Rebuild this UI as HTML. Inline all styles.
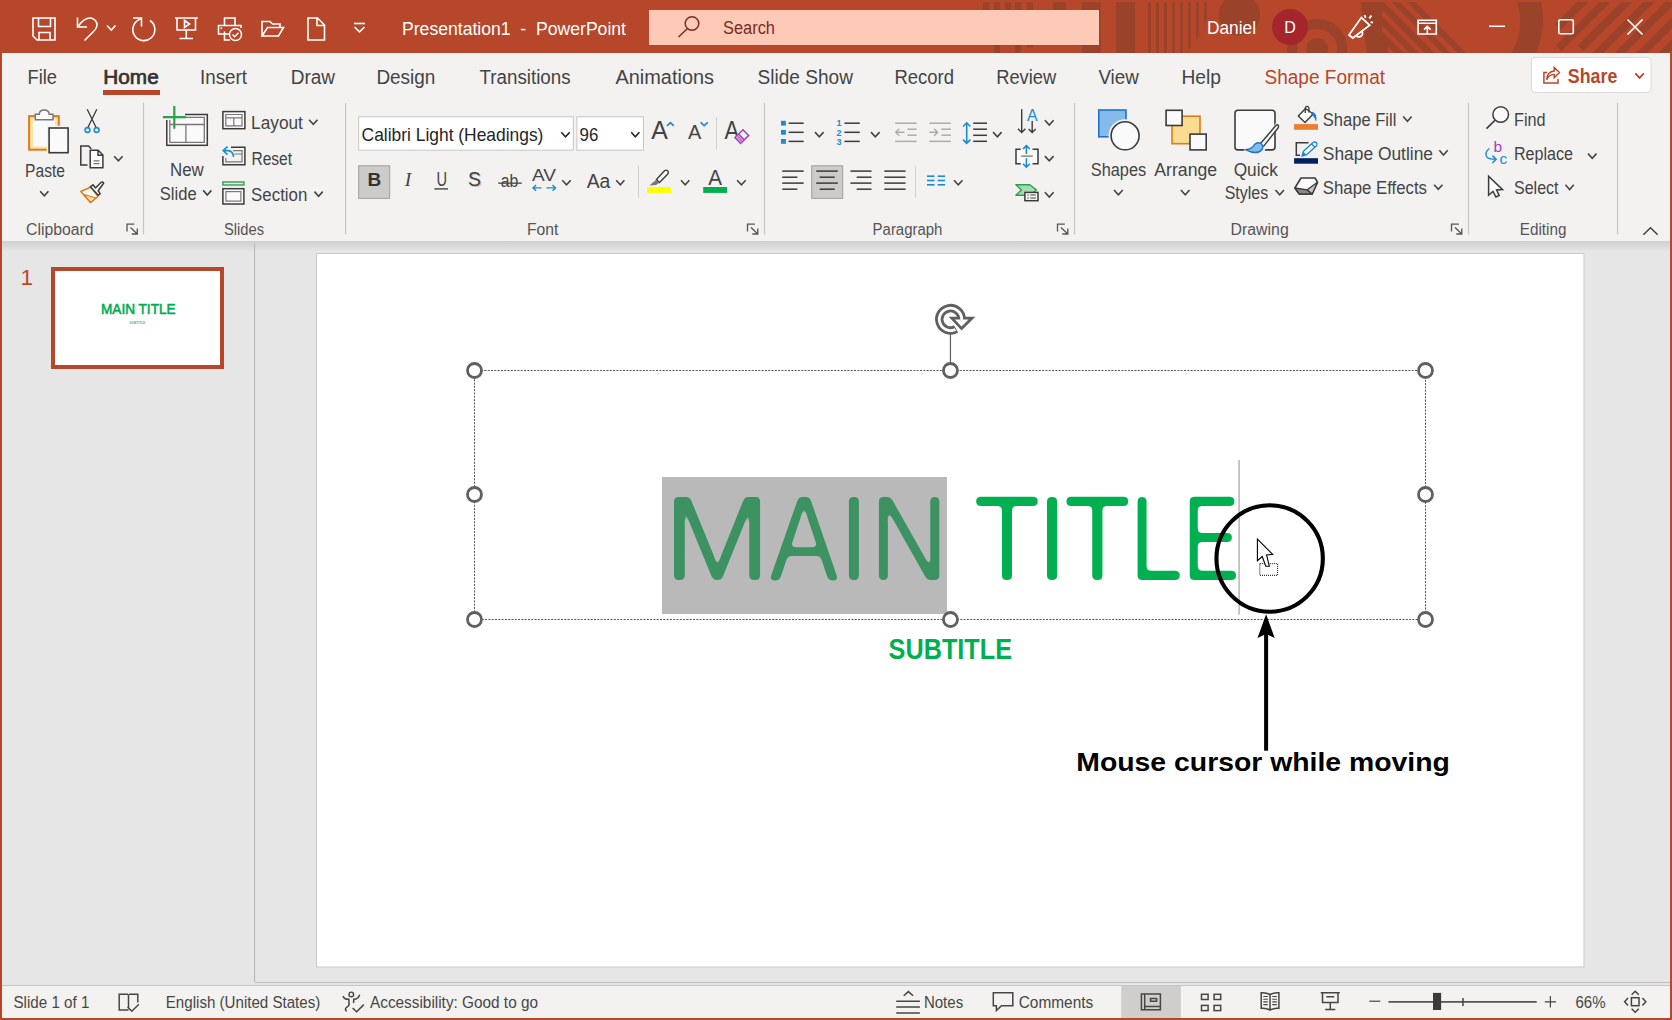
<!DOCTYPE html><html><head><meta charset="utf-8"><title>PowerPoint</title>
<style>html,body{margin:0;padding:0;background:#E6E6E6;overflow:hidden}svg{display:block;font-family:'Liberation Sans', sans-serif}</style></head><body>
<svg width="1672" height="1020" viewBox="0 0 1672 1020">
<rect x="0" y="0" width="1672" height="1020" fill="#B7472A"/>
<rect x="2" y="53" width="1668" height="188.2" fill="#F3F2F1"/>
<defs><linearGradient id="sh" x1="0" y1="0" x2="0" y2="1"><stop offset="0" stop-color="#cfcfcf"/><stop offset="1" stop-color="#E6E6E6"/></linearGradient></defs>
<rect x="2" y="241.2" width="1668" height="744.8" fill="#E6E6E6"/>
<rect x="2" y="241.2" width="1668" height="10.5" fill="url(#sh)"/>
<rect x="2" y="986" width="1668" height="32" fill="#F3F2F1"/>
<rect x="2" y="985" width="1668" height="1" fill="#c8c8c8"/>
<defs><clipPath id="tb"><rect x="0" y="0" width="1672" height="53"/></clipPath></defs>
<defs><clipPath id="dg"><rect x="1381.9" y="2" width="100" height="51"/></clipPath></defs>
<g clip-path="url(#tb)" fill="#9A422A" stroke="none">
<rect x="983.1" y="2.2" width="5.8" height="27.8"/>
<rect x="994.1" y="2.2" width="5.8" height="50.8"/>
<rect x="1005.1" y="2.2" width="5.9" height="27.8"/>
<rect x="1015" y="2.2" width="6.0" height="50.8"/>
<rect x="1027.1" y="2.2" width="5.8" height="45.3"/>
<rect x="1082" y="2.2" width="18.8" height="50.8"/>
<path d="M1052.8 2.2 H1065.9 V30 H1055 Z"/>
<rect x="1116" y="2" width="19" height="51"/>
<rect x="1148.1" y="2" width="2.8" height="51"/>
<rect x="1156.1" y="2" width="2.8" height="51"/>
<rect x="1164.1" y="2" width="2.8" height="51"/>
<rect x="1172.2" y="2" width="2.8" height="51"/>
<rect x="1180.2" y="2" width="2.8" height="51"/>
<path d="M1188.2 2 h2.8 V46.8 L1188.2 50 Z"/>
<path d="M1196.2 2 h2.8 V35.5 L1196.2 40.4 Z"/>
<path d="M1204.2 2 h2.8 V19 L1204.2 24 Z"/>
<circle cx="1239.3" cy="14.8" r="20.7"/>
<circle cx="1317.2" cy="49" r="25" fill="none" stroke="#9A422A" stroke-width="10"/>
<circle cx="1317.2" cy="49" r="10.8"/>
<path d="M1361 2 H1415 L1466 53 H1366.5 Z"/>
<g clip-path="url(#dg)" fill="#B7472A">
<path d="M1399.7 2 H1406.8 L1457.8 53 H1450.7 Z"/>
<path d="M1383.5 2 H1391.4 L1442.4 53 H1434.5 Z"/>
<path d="M1367.4 2 H1373.9 L1424.9 53 H1418.4 Z"/>
<path d="M1352.3 2 H1358.8 L1409.8 53 H1403.3 Z"/>
<path d="M1388 46.3 L1394.7 53 H1388 Z"/>
</g>
<path d="M1517 2 A58.5 58.5 0 0 1 1511 53 H1536 A81 81 0 0 0 1541 2 Z"/>
<path d="M1577.4 2 h11 L1560.9 29.5 L1555.4 24 Z"/>
<path d="M1599.4 2 h11 L1561.3 51.1 L1555.8 45.6 Z"/>
<path d="M1621.4 2 h11 L1583.3 51.1 L1577.8 45.6 Z"/>
<path d="M1643.4 2 h11 l-51 51 h-11 Z"/>
<path d="M1665.4 2 h11 l-51 51 h-11 Z"/>
<path d="M1687.4 2 h11 l-51 51 h-11 Z"/>
<path d="M1709.4 2 h11 l-51 51 h-11 Z"/>
</g>
<path d="M33 18 H55 V40 H37 L33 36 Z M38.5 18 V26.5 H50.5 V18 M39 40 V32.5 H50 V40" fill="none" stroke="#ffffff" stroke-width="1.6"/>
<path d="M77.5 17.5 V27 H87" fill="none" stroke="#ffffff" stroke-width="1.6"/>
<path d="M78 26.5 Q84 17.5 91 18 Q97 19.5 97 25.5 Q96.5 29 93 32 L84.5 40.5" fill="none" stroke="#ffffff" stroke-width="1.6"/>
<path d="M107 25.5 l4.25 4.5 l4.25 -4.5" fill="none" stroke="#ffffff" stroke-width="1.6"/>
<path d="M141 19 A11 11 0 1 0 150 20.5" fill="none" stroke="#ffffff" stroke-width="1.6"/>
<path d="M133 18 H141.5 V26.5" fill="none" stroke="#ffffff" stroke-width="1.6"/>
<path d="M175 18 H198 M177 18 V30 H195.5 V18 M186.3 30 V38.5 M179.5 38.5 H193 M184.5 20.5 L189.5 24 L184.5 27.5 Z" fill="none" stroke="#ffffff" stroke-width="1.6"/>
<path d="M224.5 25 V18 H235 V25 M230 34 H218.5 V25.5 H241 V28 M224.5 31.5 V40 H230" fill="none" stroke="#ffffff" stroke-width="1.6"/>
<circle cx="235.5" cy="34.5" r="6" fill="none" stroke="#ffffff" stroke-width="1.5"/>
<path d="M232.5 34.5 l2.2 2.2 l3.8 -4" fill="none" stroke="#ffffff" stroke-width="1.5"/>
<rect x="220.5" y="27.5" width="1.6" height="1.6" fill="#ffffff"/>
<path d="M262 36 V21.5 H270 L272.5 24 H280 V27.5 M262 36 L267.5 27.5 H283.5 L278.5 36 Z" fill="none" stroke="#ffffff" stroke-width="1.6"/>
<path d="M308 18 H317.5 L324.5 25 V40 H308 Z M317 18 V25.5 H324.5" fill="none" stroke="#ffffff" stroke-width="1.6"/>
<path d="M354 23.5 H365" fill="none" stroke="#ffffff" stroke-width="1.6"/>
<path d="M354.5 27 l5.0 4.8 l5.0 -4.8" fill="none" stroke="#ffffff" stroke-width="1.6"/>
<text x="402" y="35" font-size="18" fill="#ffffff" textLength="224" lengthAdjust="spacingAndGlyphs">Presentation1&#160; -&#160; PowerPoint</text>
<rect x="649" y="10" width="450" height="35" fill="#FCCAB6"/>
<circle cx="692" cy="23.5" r="6.8" fill="none" stroke="#7A2B22" stroke-width="1.5"/><path d="M687.5 28.5 L678.5 37" stroke="#7A2B22" stroke-width="1.5"/>
<text x="723" y="34" font-size="18" fill="#7A2B22" textLength="52" lengthAdjust="spacingAndGlyphs">Search</text>
<text x="1207" y="34" font-size="18" fill="#ffffff" textLength="49" lengthAdjust="spacingAndGlyphs">Daniel</text>
<circle cx="1290" cy="27" r="18" fill="#A4262C"/>
<text x="1290" y="33" font-size="16" fill="#ffffff" text-anchor="middle">D</text>
<path d="M1349 35 L1361.4 17.6 L1369.7 25.3 L1352.8 38 Z M1361.9 31.6 A3.3 3.3 0 0 1 1356.3 35.4" fill="none" stroke="#ffffff" stroke-width="1.8" stroke-linejoin="miter"/>
<path d="M1364.5 15 L1365.6 17.8 M1371.4 15.6 L1369.2 18.4 M1370.6 22.1 L1373 22.6" fill="none" stroke="#ffffff" stroke-width="1.8"/>
<path d="M1418.1 20.2 H1436.3 V34 H1418.1 Z M1418.1 23.2 H1436.3 M1427.3 33.5 V26.3 M1424 29.6 L1427.3 26.3 L1430.6 29.6" fill="none" stroke="#ffffff" stroke-width="1.6"/>
<path d="M1489 26.3 H1505" stroke="#ffffff" stroke-width="1.5"/>
<rect x="1558.8" y="19.8" width="14.5" height="14" rx="1.5" fill="none" stroke="#ffffff" stroke-width="1.6"/>
<path d="M1627.5 19.5 L1642.5 34.5 M1642.5 19.5 L1627.5 34.5" stroke="#ffffff" stroke-width="1.6"/>
<text x="27.5" y="84" font-size="19.5" fill="#444444" textLength="29.5" lengthAdjust="spacingAndGlyphs">File</text>
<text x="200" y="84" font-size="19.5" fill="#444444" textLength="47" lengthAdjust="spacingAndGlyphs">Insert</text>
<text x="290.7" y="84" font-size="19.5" fill="#444444" textLength="44.3" lengthAdjust="spacingAndGlyphs">Draw</text>
<text x="376.4" y="84" font-size="19.5" fill="#444444" textLength="59.0" lengthAdjust="spacingAndGlyphs">Design</text>
<text x="479.5" y="84" font-size="19.5" fill="#444444" textLength="91.1" lengthAdjust="spacingAndGlyphs">Transitions</text>
<text x="615.5" y="84" font-size="19.5" fill="#444444" textLength="98.5" lengthAdjust="spacingAndGlyphs">Animations</text>
<text x="757.5" y="84" font-size="19.5" fill="#444444" textLength="95.5" lengthAdjust="spacingAndGlyphs">Slide Show</text>
<text x="894.5" y="84" font-size="19.5" fill="#444444" textLength="59.5" lengthAdjust="spacingAndGlyphs">Record</text>
<text x="996.2" y="84" font-size="19.5" fill="#444444" textLength="60.1" lengthAdjust="spacingAndGlyphs">Review</text>
<text x="1098.4" y="84" font-size="19.5" fill="#444444" textLength="40.5" lengthAdjust="spacingAndGlyphs">View</text>
<text x="1181.5" y="84" font-size="19.5" fill="#444444" textLength="39.5" lengthAdjust="spacingAndGlyphs">Help</text>
<text x="103.3" y="84" font-size="19.5" fill="#333" textLength="55.4" lengthAdjust="spacingAndGlyphs" stroke="#333" stroke-width="0.7">Home</text>
<rect x="103" y="90" width="57" height="5" fill="#B7472A"/>
<text x="1264.5" y="84" font-size="19.5" fill="#B7472A" textLength="120.5" lengthAdjust="spacingAndGlyphs">Shape Format</text>
<rect x="1531.5" y="57.5" width="119.5" height="35" rx="3.5" fill="#ffffff" stroke="#dddbd9" stroke-width="1"/>
<path d="M1547.2 72.6 H1543.9 V83 H1558 V79" fill="none" stroke="#B7472A" stroke-width="1.5"/>
<path d="M1546.7 79.8 Q1547.2 71.6 1554.2 71 V67.4 L1559.5 72.6 L1554.2 77.8 V74.4 Q1549.2 74.4 1546.7 79.8 Z" fill="none" stroke="#B7472A" stroke-width="1.4" stroke-linejoin="miter"/>
<text x="1567.8" y="83" font-size="19.5" fill="#B7472A" textLength="49.5" lengthAdjust="spacingAndGlyphs" font-weight="bold">Share</text>
<path d="M1635.3 73.3 l4.3 4.6 l4.3 -4.6" fill="none" stroke="#B7472A" stroke-width="1.7"/>
<rect x="142.9" y="103" width="1.2" height="131.5" fill="#c8c6c4"/>
<rect x="345.0" y="103" width="1.2" height="131.5" fill="#c8c6c4"/>
<rect x="763.9" y="103" width="1.2" height="131.5" fill="#c8c6c4"/>
<rect x="1073.9" y="103" width="1.2" height="131.5" fill="#c8c6c4"/>
<rect x="1467.9" y="103" width="1.2" height="131.5" fill="#c8c6c4"/>
<rect x="1616.9" y="103" width="1.2" height="131.5" fill="#c8c6c4"/>
<text x="26" y="234.5" font-size="16" fill="#555" textLength="67.5" lengthAdjust="spacingAndGlyphs">Clipboard</text>
<text x="224" y="234.5" font-size="16" fill="#555" textLength="40" lengthAdjust="spacingAndGlyphs">Slides</text>
<text x="527" y="234.5" font-size="16" fill="#555" textLength="31.4" lengthAdjust="spacingAndGlyphs">Font</text>
<text x="872.6" y="234.5" font-size="16" fill="#555" textLength="69.8" lengthAdjust="spacingAndGlyphs">Paragraph</text>
<text x="1230.6" y="234.5" font-size="16" fill="#555" textLength="58.1" lengthAdjust="spacingAndGlyphs">Drawing</text>
<text x="1519.8" y="234.5" font-size="16" fill="#555" textLength="46.6" lengthAdjust="spacingAndGlyphs">Editing</text>
<path d="M127.0 231.4 V224.1 H134.3 M130.5 227.6 L137.3 233.9 M137.3 228.6 V234.0 H131.8" fill="none" stroke="#555" stroke-width="1.3"/>
<path d="M747.5 231.4 V224.1 H754.8 M751.0 227.6 L757.8 233.9 M757.8 228.6 V234.0 H752.3" fill="none" stroke="#555" stroke-width="1.3"/>
<path d="M1057.5 231.4 V224.1 H1064.8 M1061.0 227.6 L1067.8 233.9 M1067.8 228.6 V234.0 H1062.3" fill="none" stroke="#555" stroke-width="1.3"/>
<path d="M1451.5 231.4 V224.1 H1458.8 M1455.0 227.6 L1461.8 233.9 M1461.8 228.6 V234.0 H1456.3" fill="none" stroke="#555" stroke-width="1.3"/>
<path d="M1643.3 234.8 L1650.5 227.8 L1657.7 234.8" fill="none" stroke="#444" stroke-width="1.6"/>
<rect x="29.1" y="116.1" width="29.7" height="33.6" fill="#FBE3A6" stroke="#E07B1A" stroke-width="2"/>
<rect x="33" y="119" width="22" height="27.5" fill="#FAFAFA"/>
<path d="M35.3 119.8 V114.2 H39.2 Q39.5 109.9 44.2 109.9 Q48.9 109.9 49.2 114.2 H53 V119.8 Z" fill="#FAFAFA" stroke="#797775" stroke-width="1.5"/>
<rect x="46.8" y="125.7" width="23.6" height="29.3" fill="#F3F2F1"/>
<rect x="49.1" y="128" width="19" height="24.7" fill="#FAFAFA" stroke="#3b3b3b" stroke-width="1.6"/>
<text x="25.1" y="176.8" font-size="17.5" fill="#444444" textLength="39.9" lengthAdjust="spacingAndGlyphs">Paste</text>
<path d="M40.2 191.3 l4.1 4.6 l4.1 -4.6" fill="none" stroke="#444444" stroke-width="1.6"/>
<path d="M87.2 109.3 L96 127.3 M96.8 109.3 L88 127.3" fill="none" stroke="#3b3b3b" stroke-width="1.3"/>
<circle cx="87.5" cy="130" r="2.4" fill="none" stroke="#1E8BCD" stroke-width="1.6"/><circle cx="96.6" cy="130" r="2.4" fill="none" stroke="#1E8BCD" stroke-width="1.6"/>
<path d="M87.5 165 H80.8 V146 H88.5 L91.3 148.8" fill="none" stroke="#3b3b3b" stroke-width="1.5"/>
<path d="M90.2 150.3 H98.2 L102.9 155 V167.8 H90.2 Z M98 150.5 V155.2 H102.7" fill="#FAFAFA" stroke="#3b3b3b" stroke-width="1.5"/>
<path d="M93.6 160.8 H99.5 M93.6 163.6 H99.5" stroke="#797775" stroke-width="1.2"/>
<path d="M114.2 156.2 l4.2 4.6 l4.2 -4.6" fill="none" stroke="#444444" stroke-width="1.6"/>
<path d="M80.8 191.5 L91 187 L98 196.5 L90.5 202.5 Z" fill="#FAFAFA" stroke="#E07B1A" stroke-width="1.5" stroke-linejoin="round"/>
<path d="M84 194.5 L96 198 L90.5 202.5 Z" fill="#FBE3A6" stroke="#E07B1A" stroke-width="1.2" stroke-linejoin="round"/>
<path d="M90.3 186.8 L93 184.8 L95.5 188 L101.2 182.3 Q103 181.3 103.6 183.3 L98.2 190.8 L100.2 193.6 L98.2 195.3 Z" fill="#FAFAFA" stroke="#3b3b3b" stroke-width="1.5" stroke-linejoin="round"/>
<rect x="166.8" y="114.5" width="40.5" height="30.8" fill="#FAFAFA" stroke="#3b3b3b" stroke-width="1.5"/>
<path d="M169.8 117.4 H204.3 V142.4 H169.8 Z M169.8 124.5 H204.3 M185.9 124.5 V142.4" fill="none" stroke="#797775" stroke-width="1.3"/>
<rect x="160" y="104" width="25" height="16" fill="#F3F2F1"/>
<path d="M162.9 117.1 H185.9 M174.3 106 V128.7" stroke="#2E9E4F" stroke-width="2.2"/>
<text x="170.1" y="175.6" font-size="17.5" fill="#444444" textLength="33.7" lengthAdjust="spacingAndGlyphs">New</text>
<text x="159.8" y="199.5" font-size="17.5" fill="#444444" textLength="36.9" lengthAdjust="spacingAndGlyphs">Slide</text>
<path d="M203.2 190.4 l4.1 4.6 l4.1 -4.6" fill="none" stroke="#444444" stroke-width="1.6"/>
<rect x="222.9" y="111.6" width="22" height="17.1" fill="#FAFAFA" stroke="#3b3b3b" stroke-width="1.5"/>
<path d="M225.8 114.5 H242 V125.9 H225.8 Z M225.8 117.9 H242 M233.8 117.9 V125.9" fill="none" stroke="#797775" stroke-width="1.2"/>
<text x="251.1" y="128.7" font-size="17.5" fill="#444444" textLength="51.8" lengthAdjust="spacingAndGlyphs">Layout</text>
<path d="M309.1 119.7 l4.2 4.6 l4.2 -4.6" fill="none" stroke="#444444" stroke-width="1.6"/>
<path d="M231 147.2 H244.9 V164.8 H222.9 V156" fill="none" stroke="#3b3b3b" stroke-width="1.5"/>
<path d="M233 150.6 H242 V161.9 H225.8 V158 M234.5 154 H242" fill="none" stroke="#797775" stroke-width="1.2"/>
<path d="M227.5 146.6 L223.2 150.6 L227.5 154.6 M223.6 150.6 H228 Q233 151 233.6 156.8" fill="none" stroke="#1E8BCD" stroke-width="1.6"/>
<text x="251.4" y="164.6" font-size="17.5" fill="#444444" textLength="40.7" lengthAdjust="spacingAndGlyphs">Reset</text>
<rect x="222.9" y="182" width="21" height="3" fill="none" stroke="#2E9E4F" stroke-width="1.4"/>
<rect x="222.9" y="188.7" width="21" height="15.3" fill="#FAFAFA" stroke="#3b3b3b" stroke-width="1.5"/>
<rect x="225.9" y="191.6" width="15" height="9.5" fill="none" stroke="#797775" stroke-width="1.2"/>
<text x="251.1" y="200.5" font-size="17.5" fill="#444444" textLength="56.2" lengthAdjust="spacingAndGlyphs">Section</text>
<path d="M314.5 191.6 l4.1 4.6 l4.1 -4.6" fill="none" stroke="#444444" stroke-width="1.6"/>
<rect x="358.7" y="116.8" width="214.6" height="33.4" fill="#fff" stroke="#c8c6c4" stroke-width="1"/>
<text x="361.6" y="141.4" font-size="18.5" fill="#262626" textLength="181.8" lengthAdjust="spacingAndGlyphs">Calibri Light (Headings)</text>
<path d="M561.3 132.2 l4.2 4.7 l4.2 -4.7" fill="none" stroke="#262626" stroke-width="1.6"/>
<rect x="576.9" y="116.8" width="66.6" height="33.4" fill="#fff" stroke="#c8c6c4" stroke-width="1"/>
<text x="579.5" y="141" font-size="18.5" fill="#262626" textLength="18.8" lengthAdjust="spacingAndGlyphs">96</text>
<path d="M631.2 132.2 l4.1 4.7 l4.1 -4.7" fill="none" stroke="#262626" stroke-width="1.6"/>
<text x="651.3" y="139.2" font-size="26.5" fill="#444444" textLength="16.6" lengthAdjust="spacingAndGlyphs">A</text>
<path d="M667 125.8 L670.4 122.6 L673.8 125.8" fill="none" stroke="#1E8BCD" stroke-width="1.7"/>
<text x="688" y="139.2" font-size="20.5" fill="#444444" textLength="13.3" lengthAdjust="spacingAndGlyphs">A</text>
<path d="M700.6 122.3 L704.2 125.6 L707.8 122.3" fill="none" stroke="#1E8BCD" stroke-width="1.7"/>
<rect x="716" y="117" width="1" height="32.6" fill="#d2d0ce"/>
<text x="724.6" y="139.2" font-size="26.5" fill="#444444" textLength="14.6" lengthAdjust="spacingAndGlyphs">A</text>
<path d="M735 137.5 L743 129.8 L748.6 135.6 L740.6 143.4 Z M738.6 134 L744.2 139.8" fill="#F3F2F1" stroke="#A43EB5" stroke-width="1.5"/>
<path d="M736.4 137.5 L738.7 135.3 L743 139.8 L740.6 142 Z" fill="#C77DD1"/>
<rect x="358.7" y="165.8" width="31" height="32.6" fill="#cdcbc9" stroke="#a19f9d" stroke-width="1"/>
<text x="374.3" y="186.4" font-size="19" fill="#333" font-weight="bold" text-anchor="middle">B</text>
<text x="408" y="186.4" font-size="19.5" fill="#444444" text-anchor="middle" font-style="italic" font-family="Liberation Serif, serif">I</text>
<text x="441.7" y="186.4" font-size="19.5" fill="#444444" textLength="10.6" lengthAdjust="spacingAndGlyphs" text-anchor="middle">U</text>
<rect x="434.4" y="188.2" width="13.6" height="1.4" fill="#444444"/>
<text x="475.4" y="187.4" font-size="19.5" fill="#c4c2c0" text-anchor="middle">S</text>
<text x="474.6" y="186.4" font-size="19.5" fill="#444444" text-anchor="middle">S</text>
<text x="500.7" y="186.6" font-size="17.5" fill="#444444" textLength="17.6" lengthAdjust="spacingAndGlyphs">ab</text>
<rect x="498.2" y="182.5" width="23.6" height="1.3" fill="#444444"/>
<text x="532" y="181" font-size="16" fill="#444444" textLength="24" lengthAdjust="spacingAndGlyphs">AV</text>
<path d="M533 187.9 H541.5 M536 185 L533 187.9 L536 190.8 M546.5 187.9 H555.5 M552.5 185 L555.5 187.9 L552.5 190.8" fill="none" stroke="#1E8BCD" stroke-width="1.4"/>
<path d="M562.3 180.2 l4.2 4.6 l4.2 -4.6" fill="none" stroke="#444444" stroke-width="1.6"/>
<text x="586.7" y="187.9" font-size="20" fill="#444444" textLength="23.6" lengthAdjust="spacingAndGlyphs">Aa</text>
<path d="M616.2 180.2 l4.1 4.6 l4.1 -4.6" fill="none" stroke="#444444" stroke-width="1.6"/>
<rect x="638" y="166.2" width="1" height="31.8" fill="#d2d0ce"/>
<path d="M656.5 179.5 L664.5 170.8 Q666.3 169.4 667.8 170.9 Q669 172.4 667.8 174 L659.5 182.5 Z" fill="#FAFAFA" stroke="#3b3b3b" stroke-width="1.4"/>
<path d="M656.3 179.8 L659.3 182.7 L656 185 L649.3 185.5 Z" fill="#797775"/>
<rect x="647.1" y="187" width="23.8" height="5.9" fill="#FFFF00"/>
<path d="M681 180.2 l4.2 4.6 l4.2 -4.6" fill="none" stroke="#444444" stroke-width="1.6"/>
<text x="708.3" y="185.4" font-size="22" fill="#444444" textLength="13.8" lengthAdjust="spacingAndGlyphs">A</text>
<rect x="703.2" y="187" width="23.9" height="5.9" fill="#00B050"/>
<path d="M737.1 180.2 l4.3 4.6 l4.3 -4.6" fill="none" stroke="#444444" stroke-width="1.6"/>
<rect x="781" y="120.8" width="4.9" height="4.8" fill="#1E8BCD"/>
<rect x="788.6" y="122.45" width="15.1" height="1.5" fill="#3b3b3b"/>
<rect x="781" y="129.9" width="4.9" height="4.8" fill="#1E8BCD"/>
<rect x="788.6" y="131.55" width="15.1" height="1.5" fill="#3b3b3b"/>
<rect x="781" y="139.0" width="4.9" height="4.8" fill="#1E8BCD"/>
<rect x="788.6" y="140.65" width="15.1" height="1.5" fill="#3b3b3b"/>
<path d="M815 132.1 l4.3 4.8 l4.3 -4.8" fill="none" stroke="#444444" stroke-width="1.6"/>
<text x="839" y="126.4" font-size="9" fill="#1E8BCD" font-weight="bold" text-anchor="middle">1</text>
<rect x="844.4" y="122.45" width="15.4" height="1.5" fill="#3b3b3b"/>
<text x="839" y="135.5" font-size="9" fill="#1E8BCD" font-weight="bold" text-anchor="middle">2</text>
<rect x="844.4" y="131.55" width="15.4" height="1.5" fill="#3b3b3b"/>
<text x="839" y="144.6" font-size="9" fill="#1E8BCD" font-weight="bold" text-anchor="middle">3</text>
<rect x="844.4" y="140.65" width="15.4" height="1.5" fill="#3b3b3b"/>
<path d="M871 132.1 l4.3 4.8 l4.3 -4.8" fill="none" stroke="#444444" stroke-width="1.6"/>
<rect x="895.2" y="122.45" width="21.4" height="1.5" fill="#aeacaa"/>
<rect x="895.2" y="140.65" width="21.4" height="1.5" fill="#aeacaa"/>
<rect x="907.5" y="128.45" width="9.1" height="1.5" fill="#aeacaa"/>
<rect x="907.5" y="134.45" width="9.1" height="1.5" fill="#aeacaa"/>
<path d="M895.8 132.3 H904.4 M899.3 128.8 L895.8 132.3 L899.3 135.8" fill="none" stroke="#aeacaa" stroke-width="1.4"/>
<rect x="929.3" y="122.45" width="21.6" height="1.5" fill="#aeacaa"/>
<rect x="929.3" y="140.65" width="21.6" height="1.5" fill="#aeacaa"/>
<rect x="941.4" y="128.45" width="9.5" height="1.5" fill="#aeacaa"/>
<rect x="941.4" y="134.45" width="9.5" height="1.5" fill="#aeacaa"/>
<path d="M929.3 132.3 H937.7 M934.2 128.8 L937.7 132.3 L934.2 135.8" fill="none" stroke="#aeacaa" stroke-width="1.4"/>
<path d="M966.7 122.8 V143.3 M963 126.5 L966.7 122.8 L970.4 126.5 M963 139.6 L966.7 143.3 L970.4 139.6" fill="none" stroke="#1E8BCD" stroke-width="1.6"/>
<rect x="973.2" y="122.45" width="13.8" height="1.5" fill="#3b3b3b"/>
<rect x="973.2" y="128.45" width="13.8" height="1.5" fill="#3b3b3b"/>
<rect x="973.2" y="134.55" width="13.8" height="1.5" fill="#3b3b3b"/>
<rect x="973.2" y="140.55" width="13.8" height="1.5" fill="#3b3b3b"/>
<path d="M993.1 132.1 l4.25 4.7 l4.25 -4.7" fill="none" stroke="#444444" stroke-width="1.6"/>
<path d="M1021.7 109.2 V132.5 M1018 128.8 L1021.7 132.5 L1025.4 128.8" fill="none" stroke="#3b3b3b" stroke-width="1.4"/>
<text x="1027" y="120.5" font-size="15.8" fill="#1E8BCD" textLength="10.6" lengthAdjust="spacingAndGlyphs">A</text>
<path d="M1032.2 121 V132.5 M1028.7 129 L1032.2 132.5 L1035.7 129" fill="none" stroke="#3b3b3b" stroke-width="1.4"/>
<path d="M1044.9 120.2 l4.35 4.8 l4.35 -4.8" fill="none" stroke="#444444" stroke-width="1.6"/>
<rect x="1016" y="149.2" width="22" height="14.5" fill="#FAFAFA"/>
<path d="M1020.7 149.2 H1016 V163.7 H1020.7 M1032.5 149.2 H1038 V163.7 H1032.5" fill="none" stroke="#3b3b3b" stroke-width="1.5"/>
<rect x="1021.2" y="155.45" width="11.6" height="1.3" fill="#797775"/>
<path d="M1026.4 145.8 V153.9 M1023 149 L1026.4 145.6 L1029.8 149 M1026.4 158.3 V167 M1023 163.8 L1026.4 167.2 L1029.8 163.8" fill="none" stroke="#1E8BCD" stroke-width="1.6"/>
<path d="M1044.9 156.1 l4.35 4.8 l4.35 -4.8" fill="none" stroke="#444444" stroke-width="1.6"/>
<path d="M1015.9 184.7 H1029.8 L1036.5 190 L1029.8 195.3 H1015.9 L1021.4 190 Z" fill="#A6DDB0" stroke="#2E9E4F" stroke-width="1.4" stroke-linejoin="round"/>
<rect x="1024.9" y="192.4" width="13.1" height="8.3" fill="#FAFAFA" stroke="#3b3b3b" stroke-width="1.5"/>
<path d="M1027.3 195 H1028.8 M1030.3 195 H1035.8 M1027.3 198 H1028.8 M1030.3 198 H1035.8" stroke="#3b3b3b" stroke-width="1.1"/>
<path d="M1044.9 192.3 l4.35 4.8 l4.35 -4.8" fill="none" stroke="#444444" stroke-width="1.6"/>
<rect x="782.2" y="170.35" width="21.5" height="1.5" fill="#3b3b3b"/>
<rect x="782.2" y="176.45" width="15.2" height="1.5" fill="#3b3b3b"/>
<rect x="782.2" y="182.35" width="21.5" height="1.5" fill="#3b3b3b"/>
<rect x="782.2" y="188.45" width="15.2" height="1.5" fill="#3b3b3b"/>
<rect x="811.7" y="165.8" width="31" height="32.6" fill="#cdcbc9" stroke="#a19f9d" stroke-width="1"/>
<rect x="816.2" y="170.35" width="21.6" height="1.5" fill="#3b3b3b"/>
<rect x="819.6" y="176.45" width="15.1" height="1.5" fill="#3b3b3b"/>
<rect x="816.2" y="182.35" width="21.6" height="1.5" fill="#3b3b3b"/>
<rect x="819.6" y="188.45" width="15.1" height="1.5" fill="#3b3b3b"/>
<rect x="850.4" y="170.35" width="21.1" height="1.5" fill="#3b3b3b"/>
<rect x="856.7" y="176.45" width="14.8" height="1.5" fill="#3b3b3b"/>
<rect x="850.4" y="182.35" width="21.1" height="1.5" fill="#3b3b3b"/>
<rect x="856.7" y="188.45" width="14.8" height="1.5" fill="#3b3b3b"/>
<rect x="884.3" y="170.35" width="21.3" height="1.5" fill="#3b3b3b"/>
<rect x="884.3" y="176.45" width="21.3" height="1.5" fill="#3b3b3b"/>
<rect x="884.3" y="182.35" width="21.3" height="1.5" fill="#3b3b3b"/>
<rect x="884.3" y="188.45" width="21.3" height="1.5" fill="#3b3b3b"/>
<rect x="915" y="166.2" width="1" height="31.8" fill="#d2d0ce"/>
<rect x="927" y="175.40" width="7.5" height="1.6" fill="#1E8BCD"/>
<rect x="937.7" y="175.40" width="7.3" height="1.6" fill="#1E8BCD"/>
<rect x="927" y="179.70" width="7.5" height="1.6" fill="#1E8BCD"/>
<rect x="937.7" y="179.70" width="7.3" height="1.6" fill="#1E8BCD"/>
<rect x="927" y="184.00" width="7.5" height="1.6" fill="#1E8BCD"/>
<rect x="937.7" y="184.00" width="7.3" height="1.6" fill="#1E8BCD"/>
<path d="M954 180.2 l4.25 4.6 l4.25 -4.6" fill="none" stroke="#444444" stroke-width="1.6"/>
<rect x="1098.8" y="110" width="27.2" height="26.8" fill="#83BCEB" stroke="#1E72C8" stroke-width="1.6"/>
<circle cx="1125.1" cy="135.8" r="16.6" fill="#F3F2F1"/>
<circle cx="1125.1" cy="135.8" r="14" fill="#FAFAFA" stroke="#3b3b3b" stroke-width="1.6"/>
<text x="1090.8" y="175.7" font-size="17.5" fill="#444444" textLength="55.4" lengthAdjust="spacingAndGlyphs">Shapes</text>
<path d="M1114 190 l4.4 4.8 l4.4 -4.8" fill="none" stroke="#444444" stroke-width="1.6"/>
<rect x="1172" y="116.2" width="28" height="27.5" fill="#F9DC92" stroke="#E07B1A" stroke-width="1.6"/>
<rect x="1166.1" y="110.3" width="16" height="15.2" fill="#FAFAFA" stroke="#3b3b3b" stroke-width="1.6"/>
<rect x="1190" y="134.1" width="16.2" height="15.8" fill="#FAFAFA" stroke="#3b3b3b" stroke-width="1.6"/>
<text x="1154.3" y="175.7" font-size="17.5" fill="#444444" textLength="62.8" lengthAdjust="spacingAndGlyphs">Arrange</text>
<path d="M1180.9 190 l4.35 4.8 l4.35 -4.8" fill="none" stroke="#444444" stroke-width="1.6"/>
<rect x="1235" y="110.3" width="40" height="39.6" rx="3" fill="#FAFAFA" stroke="#3b3b3b" stroke-width="1.6"/>
<path d="M1258 147 L1276 123 Q1279 121.5 1279.8 124.5 L1264 150 Z" fill="#F3F2F1"/>
<path d="M1243 148 L1266 148 L1262 156 L1248 156 Z" fill="#F3F2F1"/>
<path d="M1260.3 143.8 L1275.8 125.6 Q1277.6 124 1278.4 125.6 Q1278.8 126.8 1277.8 128.3 L1263.3 146.6" fill="#FAFAFA" stroke="#3b3b3b" stroke-width="1.4"/>
<path d="M1246 149.8 Q1252 149 1254.5 144.5 Q1257.5 141.5 1261 143.5 Q1264 146 1262 149.5 Q1257 155.5 1246 149.8 Z" fill="#83BCEB" stroke="#1E72C8" stroke-width="1.4"/>
<text x="1233.7" y="175.7" font-size="17.5" fill="#444444" textLength="44.1" lengthAdjust="spacingAndGlyphs">Quick</text>
<text x="1224.7" y="199.3" font-size="17.5" fill="#444444" textLength="43.5" lengthAdjust="spacingAndGlyphs">Styles</text>
<path d="M1275.4 190 l4.3 4.8 l4.3 -4.8" fill="none" stroke="#444444" stroke-width="1.6"/>
<path d="M1298.3 116 L1305.5 108.5 L1313.2 114 L1305 122.5 Z" fill="#FAFAFA" stroke="#3b3b3b" stroke-width="1.4" stroke-linejoin="round"/>
<path d="M1305.3 113 V108.2 Q1305.6 106.2 1307.4 106.4 Q1309 106.7 1309 108.5 V112.5" fill="none" stroke="#3b3b3b" stroke-width="1.3"/>
<path d="M1311.8 112.2 Q1316.5 112.5 1316 120.5 Q1314.5 115.5 1312 115 Z" fill="#1E72C8" stroke="#1E72C8" stroke-width="0.8"/>
<rect x="1294.1" y="124.1" width="23.9" height="5.7" fill="#ED7D31"/>
<text x="1322.8" y="125.9" font-size="17.5" fill="#444444" textLength="73.6" lengthAdjust="spacingAndGlyphs">Shape Fill</text>
<path d="M1403.2 116.5 l4.2 4.7 l4.2 -4.7" fill="none" stroke="#444444" stroke-width="1.6"/>
<path d="M1308.5 142.8 H1296.3 V155.3 H1300" fill="none" stroke="#3b3b3b" stroke-width="1.5"/>
<path d="M1302 156 L1303.5 151.2 L1313 142.5 Q1315 141.3 1316.5 142.7 Q1317.8 144.3 1316.3 146 L1306.8 154.6 Z M1311.5 144 L1315 147.3" fill="#FAFAFA" stroke="#1E8BCD" stroke-width="1.4" stroke-linejoin="round"/>
<path d="M1302 156 L1303.3 151.8 L1306.3 154.6 Z" fill="#1E8BCD"/>
<rect x="1294.1" y="158.2" width="23.9" height="5.5" fill="#002060"/>
<text x="1322.8" y="159.7" font-size="17.5" fill="#444444" textLength="110.2" lengthAdjust="spacingAndGlyphs">Shape Outline</text>
<path d="M1439.3 150.3 l4.2 4.7 l4.2 -4.7" fill="none" stroke="#444444" stroke-width="1.6"/>
<path d="M1294.9 188 L1301 178 H1315 L1317.5 182.2 L1312.2 194 H1299.3 Z" fill="#FAFAFA" stroke="#3b3b3b" stroke-width="1.6" stroke-linejoin="round"/>
<path d="M1294.9 188 L1307.2 189.8 L1312.2 194 H1299.3 Z" fill="#8a8886" stroke="#3b3b3b" stroke-width="1.3" stroke-linejoin="round"/>
<path d="M1307.2 189.8 L1317.5 182.2 L1312.2 194 Z" fill="#c8c6c4" stroke="#3b3b3b" stroke-width="1.3" stroke-linejoin="round"/>
<text x="1322.8" y="193.8" font-size="17.5" fill="#444444" textLength="104.2" lengthAdjust="spacingAndGlyphs">Shape Effects</text>
<path d="M1434.1 184.7 l4.2 4.7 l4.2 -4.7" fill="none" stroke="#444444" stroke-width="1.6"/>
<circle cx="1500.7" cy="114.5" r="7.8" fill="#FAFAFA" stroke="#3b3b3b" stroke-width="1.5"/>
<path d="M1495 120.3 L1486.5 128.6" stroke="#3b3b3b" stroke-width="1.6"/>
<text x="1514" y="125.9" font-size="17.5" fill="#444444" textLength="31.6" lengthAdjust="spacingAndGlyphs">Find</text>
<text x="1493.6" y="152" font-size="15.5" fill="#A43EB5">b</text>
<text x="1499.6" y="163.6" font-size="15.5" fill="#1E8BCD">c</text>
<path d="M1489.5 148.5 Q1484.5 152 1486.5 156.5 Q1488 159.3 1496 159.3 M1492.3 155.6 L1496.2 159.3 L1492.3 163" fill="none" stroke="#1E8BCD" stroke-width="1.5"/>
<text x="1514" y="160" font-size="17.5" fill="#444444" textLength="59" lengthAdjust="spacingAndGlyphs">Replace</text>
<path d="M1588 153.6 l4.25 4.7 l4.25 -4.7" fill="none" stroke="#444444" stroke-width="1.6"/>
<path d="M1488.6 176.3 V195.2 L1493 191.4 L1496 197 L1499.2 195.4 L1496.6 190 L1502.6 189.6 Z" fill="#FAFAFA" stroke="#3b3b3b" stroke-width="1.5" stroke-linejoin="miter"/>
<text x="1514" y="193.8" font-size="17.5" fill="#444444" textLength="44.5" lengthAdjust="spacingAndGlyphs">Select</text>
<path d="M1565.4 184.8 l4.2 4.7 l4.2 -4.7" fill="none" stroke="#444444" stroke-width="1.6"/>
<rect x="254" y="244" width="1.1" height="738" fill="#b9b9b9"/>
<rect x="255" y="982" width="1415" height="1" fill="#bdbdbd"/>
<text x="20.5" y="285.3" font-size="22.5" fill="#C2452A">1</text>
<rect x="53" y="269" width="169" height="98" fill="#fff" stroke="#B7472A" stroke-width="4"/>
<text x="138.3" y="314" font-size="14.7" fill="#00AE50" textLength="74.6" lengthAdjust="spacingAndGlyphs" text-anchor="middle" stroke="#00AE50" stroke-width="0.6">MAIN TITLE</text>
<text x="137.4" y="324" font-size="4.3" fill="#3FBF78" textLength="15.6" lengthAdjust="spacingAndGlyphs" font-weight="bold" text-anchor="middle">SUBTITLE</text>
<rect x="316.5" y="253.5" width="1267.5" height="713.5" fill="#fff" stroke="#c9c9c9" stroke-width="1"/>
<rect x="662" y="477" width="285" height="137" fill="#B9B9B9"/>
<defs><filter id="rnd" x="-5%" y="-10%" width="110%" height="120%" color-interpolation-filters="sRGB"><feGaussianBlur in="SourceGraphic" stdDeviation="2"/><feComponentTransfer><feFuncA type="linear" slope="6" intercept="-2.5"/></feComponentTransfer></filter></defs>
<text y="579.8" font-size="120.5" fill="#3D9262" filter="url(#rnd)"><tspan x="663.4" textLength="107.2" lengthAdjust="spacingAndGlyphs">M</tspan><tspan x="769.3" textLength="69.4" lengthAdjust="spacingAndGlyphs">A</tspan><tspan x="838.9" textLength="29.8" lengthAdjust="spacingAndGlyphs">I</tspan><tspan x="870.0" textLength="78.2" lengthAdjust="spacingAndGlyphs">N</tspan></text>
<text y="579.8" font-size="120.5" fill="#00B050" filter="url(#rnd)"><tspan x="973.7" textLength="66.5" lengthAdjust="spacingAndGlyphs">T</tspan><tspan x="1037.0" textLength="30.1" lengthAdjust="spacingAndGlyphs">I</tspan><tspan x="1064.1" textLength="66.7" lengthAdjust="spacingAndGlyphs">T</tspan><tspan x="1129.7" textLength="53.2" lengthAdjust="spacingAndGlyphs">L</tspan><tspan x="1182.7" textLength="57" lengthAdjust="spacingAndGlyphs">E</tspan></text>
<text x="950.3" y="659" font-size="29.3" fill="#00B050" textLength="123.4" lengthAdjust="spacingAndGlyphs" font-weight="bold" text-anchor="middle">SUBTITLE</text>
<rect x="474.5" y="370.5" width="951" height="249" fill="none" stroke="#555" stroke-width="1" stroke-dasharray="2 1.3"/>
<path d="M950.45 334 V363" stroke="#606060" stroke-width="1.2"/>
<circle cx="474.5" cy="370.5" r="7" fill="#fff" stroke="#606060" stroke-width="2.8"/>
<circle cx="950.45" cy="370.5" r="7" fill="#fff" stroke="#606060" stroke-width="2.8"/>
<circle cx="1425.5" cy="370.5" r="7" fill="#fff" stroke="#606060" stroke-width="2.8"/>
<circle cx="474.5" cy="494.5" r="7" fill="#fff" stroke="#606060" stroke-width="2.8"/>
<circle cx="1425.5" cy="494.5" r="7" fill="#fff" stroke="#606060" stroke-width="2.8"/>
<circle cx="474.5" cy="619.5" r="7" fill="#fff" stroke="#606060" stroke-width="2.8"/>
<circle cx="950.45" cy="619.5" r="7" fill="#fff" stroke="#606060" stroke-width="2.8"/>
<circle cx="1425.5" cy="619.5" r="7" fill="#fff" stroke="#606060" stroke-width="2.8"/>
<path d="M961.7 319.3 A11.2 11.2 0 1 0 956.1 329" fill="none" stroke="#606060" stroke-width="8.4"/>
<path d="M951.8 318.1 H972 L961.6 328.6 Z" fill="#fff" stroke="#606060" stroke-width="2.8" stroke-linejoin="miter"/>
<path d="M961.7 320.5 V319.3 A11.2 11.2 0 1 0 955.4 329.4" fill="none" stroke="#fff" stroke-width="2.8"/>
<rect x="1238.4" y="460" width="1.4" height="154.6" fill="#b0b0b0"/>
<circle cx="1269.65" cy="558.5" r="53.2" fill="none" stroke="#000" stroke-width="4.1"/>
<path d="M1266.1 750.7 V630" stroke="#000" stroke-width="4"/>
<path d="M1266.1 614.2 L1274.7 638 L1266.1 634 L1257.5 638 Z" fill="#000"/>
<text x="1076.3" y="771" font-size="26.6" fill="#000" textLength="373.6" lengthAdjust="spacingAndGlyphs" font-weight="bold">Mouse cursor while moving</text>
<rect x="1259.8" y="563.7" width="17.8" height="11.6" fill="#fff" stroke="#000" stroke-width="1" stroke-dasharray="1 1"/>
<path d="M1257.4 539.1 V560.7 L1262.2 556.5 L1265.8 566.2 H1269.3 L1266.6 555 L1272.7 554.4 Z" fill="#fff" stroke="#000" stroke-width="1.1" stroke-linejoin="miter"/>
<text x="13.4" y="1007.6" font-size="16" fill="#484644" textLength="76" lengthAdjust="spacingAndGlyphs">Slide 1 of 1</text>
<path d="M128.5 994.3 V1008.5 M128.5 1010 H119.2 V994.2 H128 M129 994.2 H137.8 V1002.5 M127.6 1006.9 L131.8 1011.3 L138.9 1004.3" fill="none" stroke="#484644" stroke-width="1.5"/>
<text x="165.8" y="1007.6" font-size="16" fill="#484644" textLength="154.5" lengthAdjust="spacingAndGlyphs">English (United States)</text>
<circle cx="351.3" cy="994.4" r="2.3" fill="none" stroke="#484644" stroke-width="1.4"/>
<path d="M343.2 996.6 Q344.5 999.6 348.8 999.2 L349 1003.5 Q349.5 1006 346.5 1007.5 Q344.5 1009 346.2 1011 M359.5 995.2 Q358 999.3 353.8 999.2 L353.6 1002.5" fill="none" stroke="#484644" stroke-width="1.5" stroke-linecap="round"/>
<path d="M352.6 1008 L356.6 1011.8 L363.8 1004.6" fill="none" stroke="#484644" stroke-width="1.5"/>
<text x="370" y="1007.6" font-size="16" fill="#484644" textLength="168" lengthAdjust="spacingAndGlyphs">Accessibility: Good to go</text>
<path d="M896.2 1001.2 H919.9 M896.2 1007.1 H919.9 M896.2 1013 H919.9 M903.7 995.8 L908.4 991.6 L913.1 995.8" fill="none" stroke="#484644" stroke-width="1.5"/>
<text x="923.9" y="1007.6" font-size="16" fill="#484644" textLength="39.3" lengthAdjust="spacingAndGlyphs">Notes</text>
<path d="M993.3 992.7 H1012.8 V1005.7 H1001.5 L996.4 1010.6 V1005.7 H993.3 Z" fill="none" stroke="#484644" stroke-width="1.5"/>
<text x="1018.7" y="1007.6" font-size="16" fill="#484644" textLength="74.5" lengthAdjust="spacingAndGlyphs">Comments</text>
<rect x="1121.2" y="986" width="59.7" height="32" fill="#d0cecc"/>
<path d="M1141.4 994.1 H1160.4 V1009.8 H1141.4 Z M1144.7 994.1 V1009.8 M1144.7 1006.4 H1160.4 M1150.5 998.5 H1156.6 V1001.2 H1150.5 Z" fill="none" stroke="#484644" stroke-width="1.5"/>
<rect x="1201.5" y="994.3" width="6.6" height="5.2" fill="none" stroke="#484644" stroke-width="1.5"/>
<rect x="1201.5" y="1005.4" width="6.6" height="5.2" fill="none" stroke="#484644" stroke-width="1.5"/>
<rect x="1214.1" y="994.3" width="6.6" height="5.2" fill="none" stroke="#484644" stroke-width="1.5"/>
<rect x="1214.1" y="1005.4" width="6.6" height="5.2" fill="none" stroke="#484644" stroke-width="1.5"/>
<path d="M1270 994.5 Q1266 992.3 1261.2 992.8 V1008.3 Q1266 1007.8 1270 1010 Q1274 1007.8 1278.9 1008.3 V992.8 Q1274 992.3 1270 994.5 V1010" fill="none" stroke="#484644" stroke-width="1.5"/>
<path d="M1263.3 996.5 H1267.8 M1272.3 996.5 H1276.8" stroke="#484644" stroke-width="1.1"/>
<path d="M1263.3 999.2 H1267.8 M1272.3 999.2 H1276.8" stroke="#484644" stroke-width="1.1"/>
<path d="M1263.3 1001.9 H1267.8 M1272.3 1001.9 H1276.8" stroke="#484644" stroke-width="1.1"/>
<path d="M1263.3 1004.6 H1267.8 M1272.3 1004.6 H1276.8" stroke="#484644" stroke-width="1.1"/>
<path d="M1320.7 992.8 H1339.8 M1322.5 992.8 V1002.5 H1338 V992.8 M1330.3 1002.5 V1009.5 M1325.2 1009.5 H1335.3 M1326.3 996.7 H1334.3" fill="none" stroke="#484644" stroke-width="1.5"/>
<rect x="1369.3" y="1000.6" width="11" height="1.2" fill="#484644"/>
<rect x="1388.5" y="1001.1" width="148.2" height="1.6" fill="#484644"/>
<rect x="1433" y="992.9" width="8.1" height="17.1" fill="#3b3a39"/>
<rect x="1462.2" y="998" width="1.5" height="8.1" fill="#484644"/>
<path d="M1544.8 1001.9 H1556.1 M1550.4 996 V1007.5" stroke="#484644" stroke-width="1.2"/>
<text x="1575.5" y="1007.6" font-size="16" fill="#484644" textLength="30" lengthAdjust="spacingAndGlyphs">66%</text>
<rect x="1631.4" y="997.7" width="7.6" height="8" fill="none" stroke="#484644" stroke-width="1.5"/>
<path d="M1631.6 994.7 L1635.2 991.2 L1638.8 994.7 M1631.6 1008.7 L1635.2 1012.2 L1638.8 1008.7 M1628 998 L1624.6 1001.7 L1628 1005.4 M1642.4 998 L1645.8 1001.7 L1642.4 1005.4" fill="none" stroke="#484644" stroke-width="1.5"/>
</svg></body></html>
